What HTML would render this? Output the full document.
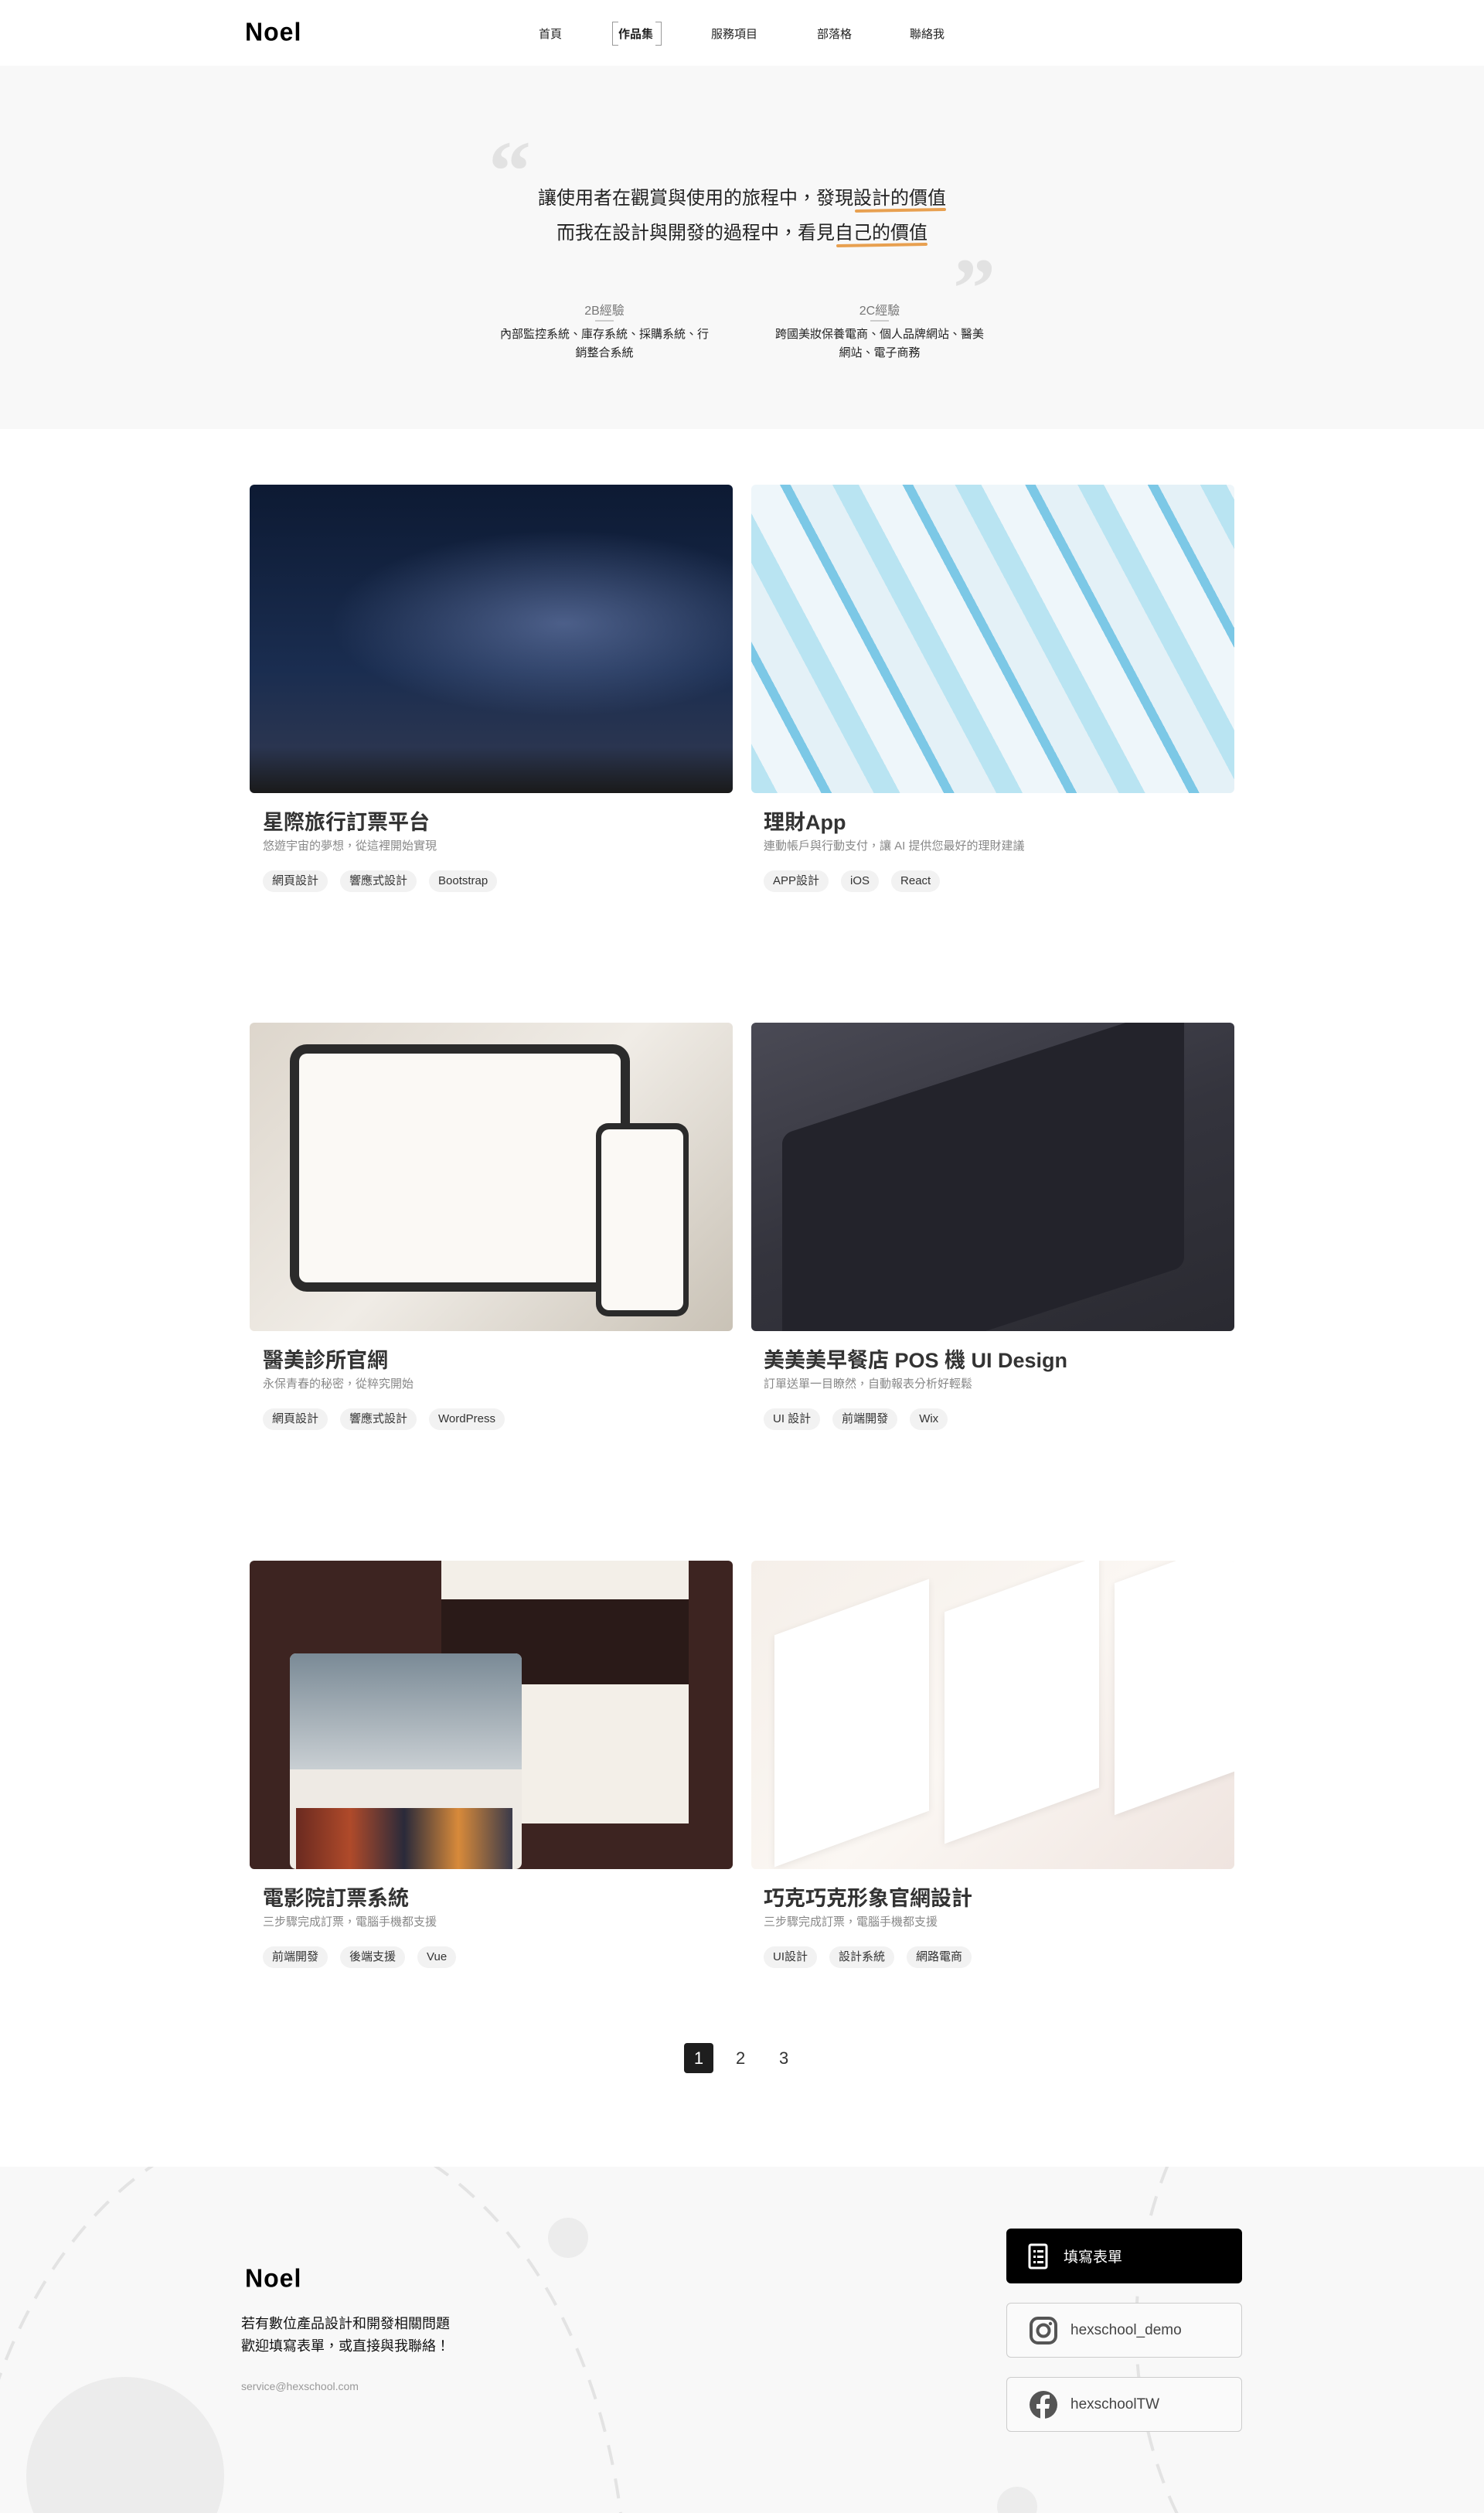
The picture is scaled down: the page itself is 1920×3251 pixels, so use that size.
<!DOCTYPE html>
<html><head><meta charset="utf-8">
<style>
*{margin:0;padding:0;box-sizing:border-box}
html{width:1920px;height:3251px;overflow:hidden}
body{width:1920px;height:3251px;position:relative;background:#fff;font-family:"Liberation Sans","Noto Sans CJK TC",sans-serif;color:#222;overflow:hidden}
.a{position:absolute}
.nav{font-size:15px;color:#222;top:33px}
.img{position:absolute;width:625px;height:399px;border-radius:6px;overflow:hidden}
.t{position:absolute;font-size:27px;font-weight:700;color:#333}
.s{position:absolute;font-size:15px;color:#888}
.tags{position:absolute;display:flex;gap:16px}
.tag{background:#f2f2f2;border-radius:14px;padding:0 12px;height:28px;line-height:28px;font-size:15px;color:#333}
.btn{position:absolute;left:1302px;width:305px;height:71px;border-radius:6px;display:flex;align-items:center;padding-left:28px;font-size:19px}
.logo{font-size:32px;font-weight:900;letter-spacing:1px;color:#000;transform:scaleY(1.05)}
</style></head><body>
<!-- header -->
<div class="a logo" style="left:317px;top:23px">Noel</div>
<div class="a nav" style="left:697px">首頁</div>
<div class="a nav" style="left:800px;font-weight:700">作品集</div>
<div class="a" style="left:792px;top:28px;width:64px;height:31px;border:1px solid #999;clip-path:polygon(0 0,8px 0,8px 100%,0 100%,0 0,100% 0,100% 100%,calc(100% - 8px) 100%,calc(100% - 8px) 0,100% 0)"></div>
<div class="a nav" style="left:920px">服務項目</div>
<div class="a nav" style="left:1057px">部落格</div>
<div class="a nav" style="left:1177px">聯絡我</div>
<!-- hero -->
<div class="a" style="left:0;top:85px;width:1920px;height:470px;background:#f8f8f8"></div>
<div class="a" style="left:632px;top:166px;font-size:110px;font-weight:900;color:#e2e2e2;font-family:'Liberation Serif',serif;line-height:1">“</div>
<div class="a" style="left:1233px;top:318px;font-size:110px;font-weight:900;color:#e2e2e2;font-family:'Liberation Serif',serif;line-height:1">”</div>
<div class="a" style="left:1106px;top:270px;width:118px;height:4px;background:#e8a050;border-radius:2px;transform:rotate(-1deg)"></div>
<div class="a" style="left:1082px;top:315px;width:118px;height:4px;background:#e8a050;border-radius:2px;transform:rotate(-1deg)"></div>
<div class="a" style="left:0;width:1920px;top:234px;text-align:center;font-size:24px;color:#222;line-height:45px">讓使用者在觀賞與使用的旅程中，發現設計的價值<br>而我在設計與開發的過程中，看見自己的價值</div>
<div class="a" style="left:632px;width:300px;top:388px;text-align:center;font-size:16px;color:#777">2B經驗</div>
<div class="a" style="left:770px;top:414px;width:24px;height:2px;background:#ccc"></div>
<div class="a" style="left:632px;width:300px;top:421px;text-align:center;font-size:15px;color:#222;line-height:24px">內部監控系統、庫存系統、採購系統、行<br>銷整合系統</div>
<div class="a" style="left:988px;width:300px;top:388px;text-align:center;font-size:16px;color:#777">2C經驗</div>
<div class="a" style="left:1126px;top:414px;width:24px;height:2px;background:#ccc"></div>
<div class="a" style="left:978px;width:320px;top:421px;text-align:center;font-size:15px;color:#222;line-height:24px">跨國美妝保養電商、個人品牌網站、醫美<br>網站、電子商務</div>

<!-- row1 -->
<div class="img" style="left:323px;top:627px;background:radial-gradient(ellipse 300px 120px at 65% 45%,rgba(120,140,190,.55),transparent),linear-gradient(180deg,#0d1a33 0%,#1a2d50 60%,#2a3550 85%,#1a1a1a 100%)"></div>
<div class="img" style="left:972px;top:627px;background:repeating-linear-gradient(62deg,#b9e4f2 0 30px,#eef6fa 30px 80px,#7cc8e6 80px 92px,#e4f1f7 92px 140px)"></div>
<div class="t" style="left:340px;top:1042px">星際旅行訂票平台</div>
<div class="s" style="left:340px;top:1083px">悠遊宇宙的夢想，從這裡開始實現</div>
<div class="tags" style="left:340px;top:1126px"><span class="tag">網頁設計</span><span class="tag">響應式設計</span><span class="tag">Bootstrap</span></div>
<div class="t" style="left:988px;top:1042px">理財App</div>
<div class="s" style="left:988px;top:1083px">連動帳戶與行動支付，讓 AI 提供您最好的理財建議</div>
<div class="tags" style="left:988px;top:1126px"><span class="tag">APP設計</span><span class="tag">iOS</span><span class="tag">React</span></div>

<!-- row2 -->
<div class="img" style="left:323px;top:1323px;background:linear-gradient(135deg,#ddd6cc,#f0ece6 50%,#c9c2b6)">
 <div class="a" style="left:52px;top:28px;width:440px;height:320px;background:#2b2b2b;border-radius:22px"></div>
 <div class="a" style="left:64px;top:40px;width:416px;height:296px;background:#fbf9f5;border-radius:10px"></div>
 <div class="a" style="left:448px;top:130px;width:120px;height:250px;background:#2b2b2b;border-radius:16px"></div>
 <div class="a" style="left:455px;top:138px;width:106px;height:234px;background:#fbf9f5;border-radius:10px"></div>
</div>
<div class="img" style="left:972px;top:1323px;background:linear-gradient(160deg,#4a4a55,#34343d 50%,#2a2a31)">
 <div class="a" style="left:40px;top:60px;width:520px;height:340px;background:#23232b;transform:skewY(-18deg);border-radius:12px"></div>
</div>
<div class="t" style="left:340px;top:1738px">醫美診所官網</div>
<div class="s" style="left:340px;top:1779px">永保青春的秘密，從粹究開始</div>
<div class="tags" style="left:340px;top:1822px"><span class="tag">網頁設計</span><span class="tag">響應式設計</span><span class="tag">WordPress</span></div>
<div class="t" style="left:988px;top:1738px">美美美早餐店 POS 機 UI Design</div>
<div class="s" style="left:988px;top:1779px">訂單送單一目瞭然，自動報表分析好輕鬆</div>
<div class="tags" style="left:988px;top:1822px"><span class="tag">UI 設計</span><span class="tag">前端開發</span><span class="tag">Wix</span></div>

<!-- row3 -->
<div class="img" style="left:323px;top:2019px;background:#3d2421">
 <div class="a" style="left:248px;top:0;width:320px;height:340px;background:#f3efe8"></div>
 <div class="a" style="left:248px;top:50px;width:320px;height:110px;background:#2a1a18"></div>
 <div class="a" style="left:52px;top:120px;width:300px;height:279px;background:#eeeae4;border-radius:8px"></div>
 <div class="a" style="left:52px;top:120px;width:300px;height:150px;background:linear-gradient(180deg,#7a8a96,#c9cfd3);border-radius:8px 8px 0 0"></div>
 <div class="a" style="left:60px;top:320px;width:280px;height:79px;background:linear-gradient(90deg,#6a2a20,#b04a2a,#2a2a3a,#d88a3a,#3a3a4a)"></div>
</div>
<div class="img" style="left:972px;top:2019px;background:linear-gradient(135deg,#f5efe9,#fbf7f3 50%,#efe4df)">
 <div class="a" style="left:30px;top:60px;width:200px;height:300px;background:#fff;transform:skewY(-20deg);box-shadow:0 2px 10px rgba(0,0,0,.08)"></div>
 <div class="a" style="left:250px;top:30px;width:200px;height:300px;background:#fff;transform:skewY(-20deg);box-shadow:0 2px 10px rgba(0,0,0,.08)"></div>
 <div class="a" style="left:470px;top:0;width:160px;height:300px;background:#fff;transform:skewY(-20deg);box-shadow:0 2px 10px rgba(0,0,0,.08)"></div>
</div>
<div class="t" style="left:340px;top:2434px">電影院訂票系統</div>
<div class="s" style="left:340px;top:2475px">三步驟完成訂票，電腦手機都支援</div>
<div class="tags" style="left:340px;top:2518px"><span class="tag">前端開發</span><span class="tag">後端支援</span><span class="tag">Vue</span></div>
<div class="t" style="left:988px;top:2434px">巧克巧克形象官網設計</div>
<div class="s" style="left:988px;top:2475px">三步驟完成訂票，電腦手機都支援</div>
<div class="tags" style="left:988px;top:2518px"><span class="tag">UI設計</span><span class="tag">設計系統</span><span class="tag">網路電商</span></div>

<!-- pagination -->
<div class="a" style="left:885px;top:2643px;width:38px;height:39px;background:#1e1e1e;border-radius:4px;color:#fff;font-size:22px;text-align:center;line-height:39px">1</div>
<div class="a" style="left:952px;top:2643px;font-size:22px;line-height:39px;color:#333">2</div>
<div class="a" style="left:1008px;top:2643px;font-size:22px;line-height:39px;color:#333">3</div>

<!-- footer -->
<div class="a" style="left:0;top:2803px;width:1920px;height:448px;background:#f8f8f8;overflow:hidden">
 <svg class="a" style="left:0;top:0" width="1920" height="448">
  <g fill="none" stroke="#e3e3e3" stroke-width="4" stroke-dasharray="26 18">
   <ellipse cx="380" cy="560" rx="430" ry="620"/>
   <ellipse cx="1800" cy="210" rx="330" ry="440"/>
  </g>
  <ellipse cx="735" cy="92" rx="26" ry="26" fill="#ececec"/>
  <ellipse cx="162" cy="400" rx="128" ry="128" fill="#ececec"/>
  <ellipse cx="1316" cy="440" rx="26" ry="26" fill="#ececec"/>
 </svg>
</div>
<div class="a logo" style="left:317px;top:2929px">Noel</div>
<div class="a" style="left:312px;top:2992px;font-size:18px;line-height:29px;color:#111">若有數位產品設計和開發相關問題<br>歡迎填寫表單，或直接與我聯絡！</div>
<div class="a" style="left:312px;top:3079px;font-size:14px;color:#999">service@hexschool.com</div>
<div class="btn" style="top:2883px;background:#000;color:#fff"><svg width="26" height="34" viewBox="0 0 26 34" style="margin-right:20px"><rect x="2" y="2" width="22" height="30" rx="2" fill="none" stroke="#fff" stroke-width="3"/><g fill="#fff"><rect x="7" y="9" width="3" height="3"/><rect x="12" y="9" width="8" height="3"/><rect x="7" y="16" width="3" height="3"/><rect x="12" y="16" width="8" height="3"/><rect x="7" y="23" width="3" height="3"/><rect x="12" y="23" width="8" height="3"/></g></svg>填寫表單</div>
<div class="btn" style="top:2979px;border:1px solid #ccc;background:#fafafa;color:#444"><svg width="38" height="38" viewBox="0 0 38 38" style="margin-right:16px"><rect x="3" y="3" width="32" height="32" rx="9" fill="none" stroke="#555" stroke-width="4"/><circle cx="19" cy="19" r="7.5" fill="none" stroke="#555" stroke-width="4"/><circle cx="28" cy="10" r="2.2" fill="#555"/></svg>hexschool_demo</div>
<div class="btn" style="top:3075px;border:1px solid #ccc;background:#fafafa;color:#444"><svg width="38" height="38" viewBox="0 0 38 38" style="margin-right:16px"><circle cx="19" cy="19" r="18" fill="#555"/><path d="M21 38V24h5l1-6h-6v-4c0-2 1-3 3-3h3V6h-4c-5 0-8 3-8 8v4h-5v6h5v14z" fill="#fafafa"/></svg>hexschoolTW</div>
</body></html>
